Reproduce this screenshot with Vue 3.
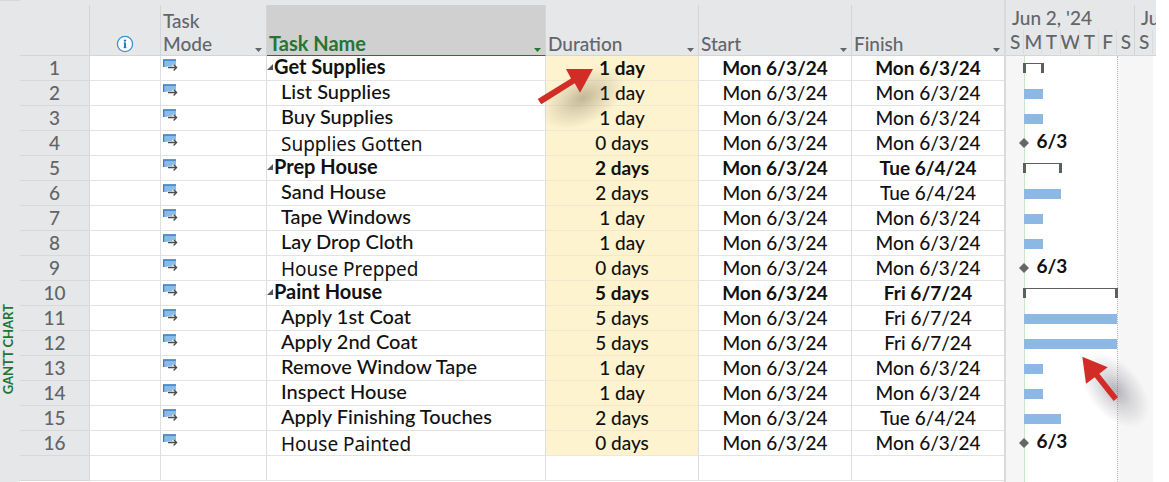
<script setup>
import { ref } from 'vue'

const start = 'Mon 6/3/24'

const tasks = ref([
  { id: 1, name: 'Get Supplies', duration: '1 day', finish: 'Mon 6/3/24', type: 'summary', days: 1 },
  { id: 2, name: 'List Supplies', duration: '1 day', finish: 'Mon 6/3/24', type: 'task', days: 1 },
  { id: 3, name: 'Buy Supplies', duration: '1 day', finish: 'Mon 6/3/24', type: 'task', days: 1 },
  { id: 4, name: 'Supplies Gotten', duration: '0 days', finish: 'Mon 6/3/24', type: 'milestone', days: 0 },
  { id: 5, name: 'Prep House', duration: '2 days', finish: 'Tue 6/4/24', type: 'summary', days: 2 },
  { id: 6, name: 'Sand House', duration: '2 days', finish: 'Tue 6/4/24', type: 'task', days: 2 },
  { id: 7, name: 'Tape Windows', duration: '1 day', finish: 'Mon 6/3/24', type: 'task', days: 1 },
  { id: 8, name: 'Lay Drop Cloth', duration: '1 day', finish: 'Mon 6/3/24', type: 'task', days: 1 },
  { id: 9, name: 'House Prepped', duration: '0 days', finish: 'Mon 6/3/24', type: 'milestone', days: 0 },
  { id: 10, name: 'Paint House', duration: '5 days', finish: 'Fri 6/7/24', type: 'summary', days: 5 },
  { id: 11, name: 'Apply 1st Coat', duration: '5 days', finish: 'Fri 6/7/24', type: 'task', days: 5 },
  { id: 12, name: 'Apply 2nd Coat', duration: '5 days', finish: 'Fri 6/7/24', type: 'task', days: 5 },
  { id: 13, name: 'Remove Window Tape', duration: '1 day', finish: 'Mon 6/3/24', type: 'task', days: 1 },
  { id: 14, name: 'Inspect House', duration: '1 day', finish: 'Mon 6/3/24', type: 'task', days: 1 },
  { id: 15, name: 'Apply Finishing Touches', duration: '2 days', finish: 'Tue 6/4/24', type: 'task', days: 2 },
  { id: 16, name: 'House Painted', duration: '0 days', finish: 'Mon 6/3/24', type: 'milestone', days: 0 }
])

const columns = [
  { key: 'mode', label: 'Task Mode' },
  { key: 'name', label: 'Task Name' },
  { key: 'duration', label: 'Duration' },
  { key: 'start', label: 'Start' },
  { key: 'finish', label: 'Finish' }
]

const weekDays = ['S', 'M', 'T', 'W', 'T', 'F', 'S']
</script>

<template>
  <div class="project">
    <aside class="view-label"><span>GANTT CHART</span></aside>

    <div class="sheet">
      <table>
        <colgroup>
          <col class="c-id" /><col class="c-info" /><col class="c-mode" /><col />
          <col class="c-date" /><col class="c-date" /><col class="c-finish" />
        </colgroup>
        <thead>
          <tr>
            <th></th>
            <th class="info">
              <svg width="18" height="18" viewBox="0 0 18 18">
                <circle cx="9" cy="9" r="7.6" fill="#fdfeff" stroke="#3793cf" stroke-width="1.3" />
                <circle cx="9" cy="5.6" r="1.2" fill="#2080c4" />
                <path d="M9 7.600v5.400" fill="none" stroke="#2080c4" stroke-width="2" />
                <path d="M7.600 8h1.400M7.400 12.700h3.200" fill="none" stroke="#2080c4" stroke-width=".8" />
              </svg>
            </th>
            <th v-for="col in columns" :key="col.key" :class="col.key">
              <div class="head">
                <span>{{ col.label }}</span>
                <button type="button" :aria-label="'Filter ' + col.label">
                  <svg width="7" height="4" viewBox="0 0 7 4"><path d="M0 0h7L3.5 4z" fill="currentColor" /></svg>
                </button>
              </div>
            </th>
          </tr>
        </thead>
        <tbody>
          <tr v-for="task in tasks" :key="task.id" :class="task.type">
            <td class="id">{{ task.id }}</td>
            <td></td>
            <td class="mode">
              <svg width="15" height="12" viewBox="0 0 15 12">
                <path d="M0 .5h13v7.500h-13z" fill="#86bbea" />
                <path d="M0 1h13M.6 1v7" fill="none" stroke="#3f80c0" stroke-width="1.4" />
                <path d="M4.500 8.500h8M10 5.500l3 3-3 3" fill="none" stroke="#fff" stroke-width="2.6" />
                <path d="M5 8.500h8.500M10.600 5.500l3 3-3 3" fill="none" stroke="#4a4a4a" stroke-width="1.3" />
              </svg>
            </td>
            <td class="name">
              <svg v-if="task.type === 'summary'" class="twisty" width="6" height="6" viewBox="0 0 6 6">
                <path d="M6 0v6H0z" fill="#555" />
              </svg>{{ task.name }}
            </td>
            <td class="duration">{{ task.duration }}</td>
            <td class="date">{{ start }}</td>
            <td class="date">{{ task.finish }}</td>
          </tr>
          <tr>
            <td class="id"></td><td></td><td></td><td></td><td></td><td></td><td></td>
          </tr>
        </tbody>
      </table>
      <svg class="arrow arrow-duration" width="100" height="90" viewBox="525 55 100 90">
        <defs>
          <radialGradient id="shadeA">
            <stop offset="0" stop-color="#5a5030" stop-opacity=".36" />
            <stop offset=".45" stop-color="#5a5030" stop-opacity=".18" />
            <stop offset="1" stop-color="#5a5030" stop-opacity="0" />
          </radialGradient>
        </defs>
        <ellipse cx="583" cy="98" rx="46" ry="26" transform="rotate(-28 583 98)" fill="url(#shadeA)" />
        <path d="M593 69h-27l5 9.500-33.300 20.500 3.600 5.300 33.400-21 5.300 9.400z" fill="#d12c26" />
      </svg>
    </div>

    <div class="chart">
      <div class="timescale">
        <div class="week">
          <div class="week-name">Jun 2, '24</div>
          <div class="days"><span v-for="(d, i) in weekDays" :key="i">{{ d }}</span></div>
        </div>
        <div class="week next">
          <div class="week-name">Ju</div>
          <div class="days"><span>S</span><span></span></div>
        </div>
      </div>

      <div class="plot">
        <div class="shade">
          <i class="off"></i><i class="work"></i><i class="off end"></i><i></i>
        </div>
        <div class="bars">
          <div v-for="task in tasks" :key="task.id" class="bar-row">
            <div v-if="task.type === 'milestone'" class="mark">
              <svg width="10" height="10" viewBox="0 0 10 10"><path d="M5 0l5 5-5 5-5-5z" fill="#646765" /></svg>
              <span>6/3</span>
            </div>
            <div v-else :class="task.type === 'summary' ? 'bracket' : 'bar'" :style="{ gridColumnEnd: 'span ' + task.days }"></div>
          </div>
        </div>
      </div>
      <svg class="arrow arrow-chart" width="86" height="90" viewBox="1070 345 86 90">
        <defs>
          <radialGradient id="shadeB">
            <stop offset="0" stop-color="#445" stop-opacity=".4" />
            <stop offset=".45" stop-color="#445" stop-opacity=".18" />
            <stop offset="1" stop-color="#445" stop-opacity="0" />
          </radialGradient>
        </defs>
        <ellipse cx="1115" cy="390" rx="44" ry="26" transform="rotate(50 1115 390)" fill="url(#shadeB)" />
        <path d="M1082.300 356.700l25.400 10.600-8.400 6.400 18.700 23.600-4.300 3.700-19-23.700-8.700 6.400z" fill="#d12c26" />
      </svg>
    </div>
  </div>
</template>

<style>
body { margin: 0; background: #fff; }
</style>

<style scoped>
.project {
  display: flex;
  min-height: 100vh;
  box-sizing: border-box;
  padding-right: 13px;
  font-family: Lato, "Open Sans", sans-serif;
  font-size: 19px;
  font-weight: 500;
  line-height: 24px;
  color: #111;
  overflow: hidden;
}
.view-label {
  width: 20px;
  flex: none;
  box-sizing: border-box;
  display: flex;
  align-items: flex-end;
  padding-bottom: 88px;
  background: #e6e7e8;
  border-top: 1px solid #d6d8d9;
  color: #23752f;
  font-size: 13px;
  font-weight: 700;
  line-height: 16px;
}
.view-label span { writing-mode: vertical-rl; transform: rotate(180deg); white-space: nowrap; }

.sheet { flex: 1; min-width: 0; position: relative; border-right: 2px solid #d9dadb; }
table { width: 100%; table-layout: fixed; border-collapse: separate; border-spacing: 0; border-top: 5px solid #e6e7e8; }
.c-id { width: 70px; }
.c-info { width: 71px; }
.c-mode { width: 106px; }
.c-date { width: 153px; }
.c-finish { width: 152px; }

th, td { box-sizing: border-box; padding: 0; border-right: 1px solid #dcdee0; border-bottom: 1px solid #e2e3e4; white-space: nowrap; }
th:last-child, td:last-child { border-right: 0; }
th { height: 51px; background: #e6e7e8; border-color: #d3d5d7; color: #62666b; font-weight: 500; text-align: left; vertical-align: bottom; }
th.info { text-align: center; line-height: 0; padding-bottom: 2px; }
th.name { background: #d0d0d0; color: #277532; border-bottom-color: #277532; font-size: 20px; font-weight: 700; }
.head { display: flex; justify-content: space-between; align-items: flex-end; padding: 0 4px 0 2px; line-height: 23px; white-space: normal; }
.head button { display: flex; padding: 0 0 3px; border: 0; background: none; color: inherit; cursor: pointer; }
th.mode .head span { width: 60px; }

td { height: 25px; background: #fff; text-align: center; }
td.id { background: #e6e7e8; color: #5f656a; border-color: #d6d8da; }
td.mode { text-align: left; vertical-align: top; line-height: 0; padding: 3px 0 0 2px; }
td.name { position: relative; text-align: left; padding: 0 0 3px 14px; font-size: 20px; line-height: 21px; }
.summary td.name { padding-left: 7px; }
.twisty { position: absolute; left: 0; top: 8px; }
.summary td.name, .summary td.duration, .summary td.date { font-weight: 700; }
.milestone td.name { padding: 2px 0 0 14px; font-family: "Noto Sans", sans-serif; font-size: 19px; line-height: 22px; font-weight: 400; }
td.duration { background: #fef3cf; border-bottom-color: #f0e9d0; }

.chart { position: relative; width: 150px; flex: none; display: flex; flex-direction: column; overflow: hidden; }
.timescale { display: flex; height: 56px; box-sizing: border-box; padding-top: 5px; background: #e6e7e8; border-bottom: 1px solid #d3d5d7; color: #62666b; }
.week { width: 129px; flex: none; }
.week.next { box-shadow: -1px 0 #d3d5d7; }
.week-name { padding-left: 6px; line-height: 25px; white-space: nowrap; }
.days { display: grid; grid-template-columns: repeat(7, 1fr); text-align: center; line-height: 24px; }
.days span + span { box-shadow: -1px 0 #d9dbdc; }

.plot { flex: 1; display: grid; }
.shade, .bars { grid-area: 1 / 1; }
.shade { display: grid; width: 258px; grid-template-columns: 1fr 5fr 2fr 6fr; }
.shade .off { background: #f6f6f6; }
.shade .work { border-left: 1px solid #c9e8c9; }
.shade .end { border-left: 1px dotted #bbb; }
.bars { width: 129px; }
.bar-row { display: grid; grid-template-columns: repeat(7, 1fr); height: 25px; align-items: center; }
.bar { grid-column-start: 2; height: 10px; background: #8db8e3; }
.bracket { grid-column-start: 2; height: 9px; margin: 0 -1px 2px; border: solid #5b605c; border-width: 1px 3px 0; }
.mark { grid-column: 2 / 7; display: flex; align-items: center; margin-left: -5px; gap: 7px; font-weight: 700; }
.mark span { line-height: 18px; padding-bottom: 6px; }
.mark svg { margin-bottom: 2px; }

/* callout arrows float over the sheet and the chart */
.arrow { position: absolute; overflow: visible; pointer-events: none; }
.arrow-duration { top: 55px; right: 379px; }
.arrow-chart { top: 345px; right: 0; }
</style>
